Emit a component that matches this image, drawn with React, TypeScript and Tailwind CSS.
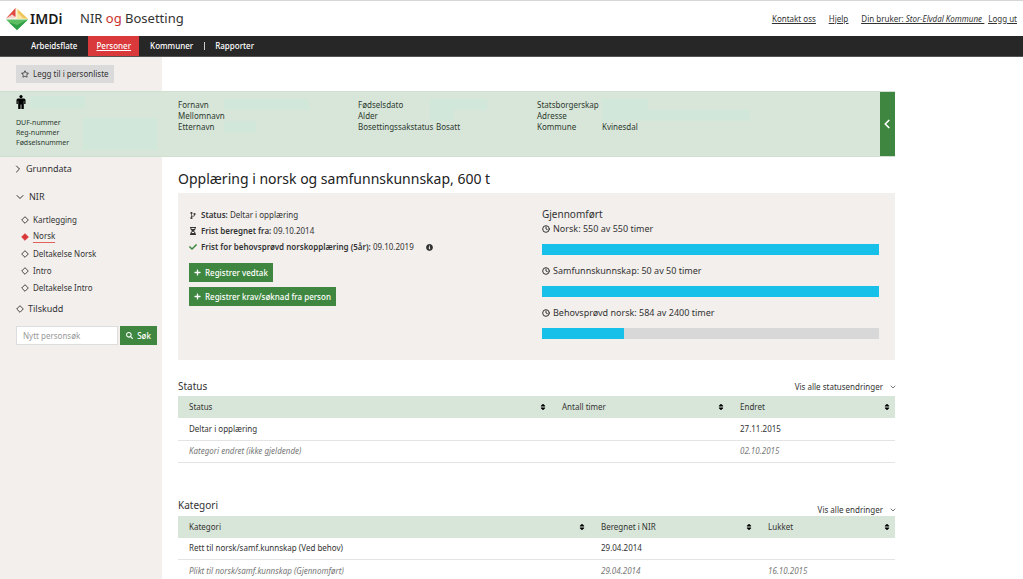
import React from 'react'

import {
  FaCheck,
  FaCodeBranch,
  FaHourglassHalf,
  FaInfoCircle,
  FaPlus,
  FaRegStar,
  FaSearch,
  FaSort,
} from 'react-icons/fa'
import { ChevronDown, ChevronLeft, ChevronRight, Clock } from 'lucide-react'

const Logo: React.FC = () => (
  <svg viewBox="0 0 22 22" className="size-[22px]" aria-hidden="true">
    <path d="M9.5 0v10.5H0z" fill="#f6d5cf" />
    <path d="M9.5 0v9L6 6.5L0 10.5z" fill="#df4a42" />
    <path d="M10.5 0L22 11H10.5z" fill="#f8e6a6" />
    <path d="M12 1.5L22 11L17 10L12 5z" fill="#efc65c" />
    <path d="M0 11.5h22L11 22z" fill="#5cbc62" />
    <path d="M3 14.5L11 17L22 11.5L11 22z" fill="#2f9e44" />
  </svg>
)

const PersonIcon: React.FC = () => (
  <svg viewBox="0 0 10 14" className="h-[14px] w-[10px]" aria-hidden="true">
    <circle cx="5" cy="1.6" r="1.6" />
    <path d="M2 3.6h6q1.5 0 1.5 1.5v4H8.2V5.8H7.8V14H5.4V9.5H4.6V14H2.2V5.8H1.8v3.3H.5v-4q0-1.5 1.5-1.5z" />
  </svg>
)

const Diamond: React.FC<{ active?: boolean }> = ({ active }) => (
  <svg viewBox="0 0 8 8" className="size-2 shrink-0" aria-hidden="true">
    <path
      d="M4 .7L7.3 4 4 7.3.7 4z"
      fill={active ? '#d9363a' : 'none'}
      stroke={active ? '#d9363a' : '#333'}
      strokeWidth="0.9"
    />
  </svg>
)

const navItems = ['Arbeidsflate', 'Personer', 'Kommuner', 'Rapporter']

const Header: React.FC = () => (
  <header>
    <div className="flex h-9 items-center border-t border-[#d6d6d6] pl-1.5 pr-1.5">
      <Logo />
      <span className="ml-0.5 w-[50px] text-[14px] font-semibold text-[#1a1a1a]">IMDi</span>
      <span className="text-[13px]">
        NIR <span className="text-[#c9302c]">og</span> Bosetting
      </span>
      <div className="ml-auto flex text-[8px] underline">
        <a href="#kontakt">Kontakt oss</a>
        <a href="#hjelp" className="ml-[13px]">
          Hjelp
        </a>
        <a href="#bruker" className="ml-[13px]">
          Din bruker: <em>Stor-Elvdal Kommune</em>&nbsp;
        </a>
        <a href="#logg-ut" className="ml-1">
          Logg ut
        </a>
      </div>
    </div>
    <nav className="flex h-[21px] items-center border-b border-[#555] bg-[#272727] pl-5 text-[8px] font-medium text-white">
      {navItems.map((item) => (
        <React.Fragment key={item}>
          {item === 'Rapporter' && <span className="h-2 w-px bg-[#ccc]" />}
          <a
            href={'#' + item.toLowerCase()}
            className={
              item === 'Personer'
                ? 'flex h-5 items-center bg-[#d9393a] px-2 underline'
                : item === 'Rapporter'
                  ? 'px-2.5'
                  : 'px-[11px]'
            }
          >
            {item}
          </a>
        </React.Fragment>
      ))}
    </nav>
  </header>
)

// label, value, width of the masked area when there is no value
const personColumns = [
  [
    ['Fornavn', '', 'ml-[46px] w-[85px]'],
    ['Mellomnavn', '', ''],
    ['Etternavn', '', 'ml-[46px] w-8'],
  ],
  [
    ['Fødselsdato', '', 'ml-[72px] w-[57px]'],
    ['Alder', '', 'ml-[72px] w-6'],
    ['Bosettingssakstatus', 'Bosatt', ''],
  ],
  [
    ['Statsborgerskap', '', 'ml-[65px] w-[46px]'],
    ['Adresse', '', 'ml-[65px] w-[148px]'],
    ['Kommune', 'Kvinesdal', ''],
  ],
]

const PersonBand: React.FC = () => (
  <section className="flex h-[66px] max-w-[895px] border-y border-[#cfe0d0] bg-[#d8e6d9] text-[#2d3a30]">
    <div className="w-[178px] shrink-0 pl-4 pt-[3px]">
      <div className="flex items-center gap-1 text-black">
        <PersonIcon />
        <span className="h-3 w-[55px] bg-[#d1e7d9]" />
      </div>
      <div className="mt-[9px] flex">
        <ul className="w-[67px] text-[7px] leading-[10px]">
          <li>DUF-nummer</li>
          <li>Reg-nummer</li>
          <li>Fødselsnummer</li>
        </ul>
        <span className="h-8 w-[74px] bg-[#d1e7d9]" />
      </div>
    </div>
    <div className="grid flex-1 grid-cols-[180px_179px_1fr] pt-[7px] text-[8px] leading-[11px]">
      {personColumns.map((rows, index) => (
        <dl key={index}>
          {rows.map(([label, value, mask]) => (
            <div key={label} className="grid">
              {mask && <span className={'col-start-1 row-start-1 h-[11px] bg-[#d1e7d9] ' + mask} />}
              <div className="col-start-1 row-start-1 flex">
                <dt className={index === 2 ? 'w-[65px]' : 'min-w-[78px]'}>{label}</dt>
                <dd>{value}</dd>
              </div>
            </div>
          ))}
        </dl>
      ))}
    </div>
    <button
      type="button"
      aria-label="Skjul"
      className="flex w-[15px] items-center justify-center bg-[#3f8740] text-white"
    >
      <ChevronLeft size={14} strokeWidth={3} className="mr-0.5 shrink-0" />
    </button>
  </section>
)

const subItems = ['Kartlegging', 'Norsk', 'Deltakelse Norsk', 'Intro', 'Deltakelse Intro']

const Sidebar: React.FC = () => (
  <aside className="w-[162px] shrink-0 bg-[#f2efed] pl-4 pt-1 text-[9px] leading-4">
    <a href="#grunndata" className="flex items-center gap-0.5">
      <ChevronRight size={12} strokeWidth={2} className="-ml-1" />
      Grunndata
    </a>
    <a href="#nir" className="mt-3 flex items-center gap-[3px]">
      <ChevronDown size={12} strokeWidth={2} className="-ml-0.5" />
      NIR
    </a>
    <ul className="mt-1.5 pl-[5px] text-[8px]">
      {subItems.map((item) => (
        <li key={item} className="flex h-[17px] items-center gap-1">
          <Diamond active={item === 'Norsk'} />
          <a
            href={'#' + item.toLowerCase().replace(' ', '-')}
            className={item === 'Norsk' ? 'border-b border-[#e0605a] leading-3' : 'leading-3'}
          >
            {item}
          </a>
        </li>
      ))}
    </ul>
    <a href="#tilskudd" className="mt-[5px] flex items-center gap-1">
      <Diamond />
      Tilskudd
    </a>
    <form className="mt-[9px] flex gap-0.5 text-[8px]">
      <input
        type="text"
        aria-label="Nytt personsøk"
        placeholder="Nytt personsøk"
        className="h-[19px] w-[102px] border border-[#ddd] bg-white px-1.5 placeholder:text-[#999]"
      />
      <button
        type="button"
        className="flex h-[19px] w-[37px] items-center justify-center gap-1 bg-[#3f8740] font-medium text-white"
      >
        <FaSearch size={7} />
        Søk
      </button>
    </form>
  </aside>
)

const progress = [
  { label: 'Norsk', done: 550, total: 550 },
  { label: 'Samfunnskunnskap', done: 50, total: 50 },
  { label: 'Behovsprøvd norsk', done: 584, total: 2400 },
]

const Summary: React.FC = () => (
  <section className="flex h-[167px] bg-[#f2efed] px-[11px] pt-3">
    <div className="flex-1 text-[8px]">
      <ul className="pt-0.5 leading-4">
        <li className="flex items-center gap-1">
          <FaCodeBranch size={7} className="w-2" />
          <span>
            <b className="font-semibold">Status:</b> Deltar i opplæring
          </span>
        </li>
        <li className="flex items-center gap-1">
          <FaHourglassHalf size={8} className="w-2" />
          <span>
            <b className="font-semibold">Frist beregnet fra:</b> 09.10.2014
          </span>
        </li>
        <li className="flex items-center gap-1">
          <FaCheck size={8} className="w-2 text-[#3f8740]" />
          <span>
            <b className="font-semibold">Frist for behovsprøvd norskopplæring (5år):</b> 09.10.2019
          </span>
          <FaInfoCircle size={7} className="ml-2" />
        </li>
      </ul>
      <div className="mt-2 flex flex-col items-start gap-[5px]">
        {['Registrer vedtak', 'Registrer krav/søknad fra person'].map((label) => (
          <button
            key={label}
            type="button"
            className="flex h-[19px] items-center gap-1 bg-[#3f8740] px-[5px] font-medium text-white"
          >
            <FaPlus size={7} />
            {label}
          </button>
        ))}
      </div>
    </div>
    <div className="mr-[5px] w-[337px] pt-0.5">
      <h2 className="text-[10px] leading-[14px]">Gjennomført</h2>
      {progress.map(({ label, done, total }) => (
        <div key={label} className="mb-2">
          <p className="flex h-4 items-center gap-[3px] text-[9px]">
            <Clock size={8} strokeWidth={3} />
            {label}: {done} av {total} timer
          </p>
          <div className="mt-[7px] h-[11px] bg-[#d8d8d8]">
            <div className="h-full bg-[#17c0e8]" style={{ width: `${(done / total) * 100}%` }} />
          </div>
        </div>
      ))}
    </div>
  </section>
)

type Column = { name: string; className: string }

const DataTable: React.FC<{ columns: Column[]; rows: string[][] }> = ({ columns, rows }) => (
  <table className="w-full table-fixed text-left text-[8px]">
    <thead className="bg-[#d8e6d9]">
      <tr className="h-[22px]">
        {columns.map(({ name, className }) => (
          <th key={name} className={'pl-[11px] pr-1 font-normal ' + className}>
            <span className="flex items-center justify-between">
              {name}
              <FaSort size={8} className="text-black" />
            </span>
          </th>
        ))}
      </tr>
    </thead>
    <tbody>
      {rows.map((row, index) => (
        <tr
          key={row[0]}
          className={
            index === 1
              ? 'h-[22px] border-b border-[#e4e4e4] italic text-[#777]'
              : 'h-[22px] border-b border-[#e4e4e4]'
          }
        >
          {row.map((cell, cellIndex) => (
            <td key={cellIndex} className="pl-[11px]">
              {cell}
            </td>
          ))}
        </tr>
      ))}
    </tbody>
  </table>
)

const ShowAll: React.FC<{ label: string }> = ({ label }) => (
  <button type="button" className="flex items-center gap-1.5 text-[8px] leading-3">
    {label}
    <ChevronDown size={8} strokeWidth={2} className="-mr-0.5" />
  </button>
)

export default function App() {
  return (
    <div className="min-h-screen bg-white font-['Noto_Sans','Open_Sans',sans-serif] text-[#333]">
      <Header />
      <div className="flex h-[34px]">
        <div className="w-[162px] bg-[#f2efed] pl-4 pt-2">
          <button
            type="button"
            className="flex h-[18px] w-[98px] items-center gap-1 bg-[#dadada] pl-[5px] text-[8px]"
          >
            <FaRegStar size={8} />
            Legg til i personliste
          </button>
        </div>
      </div>
      <PersonBand />
      <div className="flex max-w-[895px]">
        <Sidebar />
        <main className="min-w-0 flex-1 pl-4">
          <h1 className="pb-1 pt-3 text-[14px] leading-5 text-[#222]">
            Opplæring i norsk og samfunnskunnskap, 600 t
          </h1>
          <Summary />
          <section className="pt-[19px]">
            <div className="flex h-[17px] items-start justify-between">
              <h2 className="text-[10px] leading-[14px]">Status</h2>
              <div className="pt-0.5">
                <ShowAll label="Vis alle statusendringer" />
              </div>
            </div>
            <DataTable
              columns={[
                { name: 'Status', className: '' },
                { name: 'Antall timer', className: 'w-[178px]' },
                { name: 'Endret', className: 'w-[166px]' },
              ]}
              rows={[
                ['Deltar i opplæring', '', '27.11.2015'],
                ['Kategori endret (ikke gjeldende)', '', '02.10.2015'],
              ]}
            />
          </section>
          <section className="pt-[35px]">
            <div className="flex h-[18px] items-start justify-between">
              <h2 className="text-[10px] leading-[14px]">Kategori</h2>
              <div className="self-end">
                <ShowAll label="Vis alle endringer" />
              </div>
            </div>
            <DataTable
              columns={[
                { name: 'Kategori', className: '' },
                { name: 'Beregnet i NIR', className: 'w-[167px]' },
                { name: 'Lukket', className: 'w-[138px]' },
              ]}
              rows={[
                ['Rett til norsk/samf.kunnskap (Ved behov)', '29.04.2014', ''],
                ['Plikt til norsk/samf.kunnskap (Gjennomført)', '29.04.2014', '16.10.2015'],
              ]}
            />
          </section>
        </main>
      </div>
    </div>
  )
}
